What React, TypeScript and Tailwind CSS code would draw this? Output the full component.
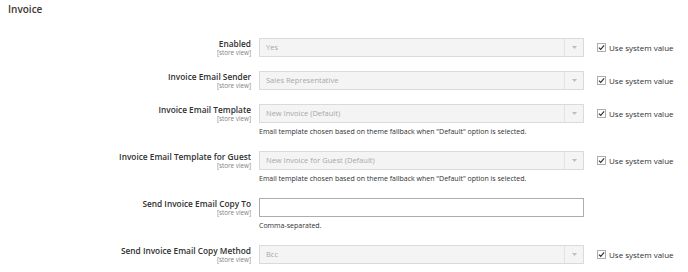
const rows = [
  { label: "Enabled", value: "Yes", type: "select", system: true },
  { label: "Invoice Email Sender", value: "Sales Representative", type: "select", system: true },
  {
    label: "Invoice Email Template",
    value: "New Invoice (Default)",
    type: "select",
    system: true,
    note: 'Email template chosen based on theme fallback when "Default" option is selected.',
  },
  {
    label: "Invoice Email Template for Guest",
    value: "New Invoice for Guest (Default)",
    type: "select",
    system: true,
    note: 'Email template chosen based on theme fallback when "Default" option is selected.',
  },
  { label: "Send Invoice Email Copy To", value: "", type: "text", system: false, note: "Comma-separated." },
  { label: "Send Invoice Email Copy Method", value: "Bcc", type: "select", system: true },
];

const Check = () => (
  <span className="flex h-[9px] w-[9px] items-center justify-center border border-[#adadad] bg-white">
    <svg width="7" height="7" viewBox="0 0 8 8">
      <path d="M1 4.2 L3.1 6.2 L7 1.6" fill="none" stroke="#303030" strokeWidth="1.3" />
    </svg>
  </span>
);

export default function App() {
  return (
    <div
      className="h-[272px] w-[688px] overflow-hidden bg-white text-[#303030]"
      style={{ fontFamily: '"Open Sans", sans-serif' }}
    >
      <div className="pl-[8px] pt-[2px] text-[10px] font-semibold leading-[14px] text-[#41362f]">Invoice</div>
      <div className="mt-[22px] flex flex-col gap-[14px]">
        {rows.map((row) => (
          <div key={row.label} className="flex">
            <div className="flex w-[251px] flex-col items-end">
              <span className="text-[8.3px] font-semibold leading-[11px]">{row.label}</span>
              <span className="text-[6.3px] leading-[7px] text-[#808080]">[store view]</span>
            </div>
            <div className="ml-[8px] flex w-[325px] flex-col">
              {row.type === "select" ? (
                <div className="flex h-[19px] items-center border border-[#dadada] bg-[#f4f4f4]">
                  <span className="flex-1 pl-[6px] text-[7.5px] text-[#a8a8a8]">{row.value}</span>
                  <span className="flex h-full w-[19px] items-center justify-center border-l border-[#e2e2e2]">
                    <svg width="5" height="3" viewBox="0 0 5 3">
                      <path d="M0 0 L5 0 L2.5 3 Z" fill="#bdbdbd" />
                    </svg>
                  </span>
                </div>
              ) : (
                <div className="h-[19px] border border-[#adadad] bg-white" />
              )}
              {row.note && (
                <div className="pt-[3px] text-[7px] leading-[11px] text-[#303030]">{row.note}</div>
              )}
            </div>
            {row.system && (
              <div className="ml-[13px] flex h-[19px] items-center gap-[3px]">
                <Check />
                <span className="text-[8px]">Use system value</span>
              </div>
            )}
          </div>
        ))}
      </div>
    </div>
  );
}
